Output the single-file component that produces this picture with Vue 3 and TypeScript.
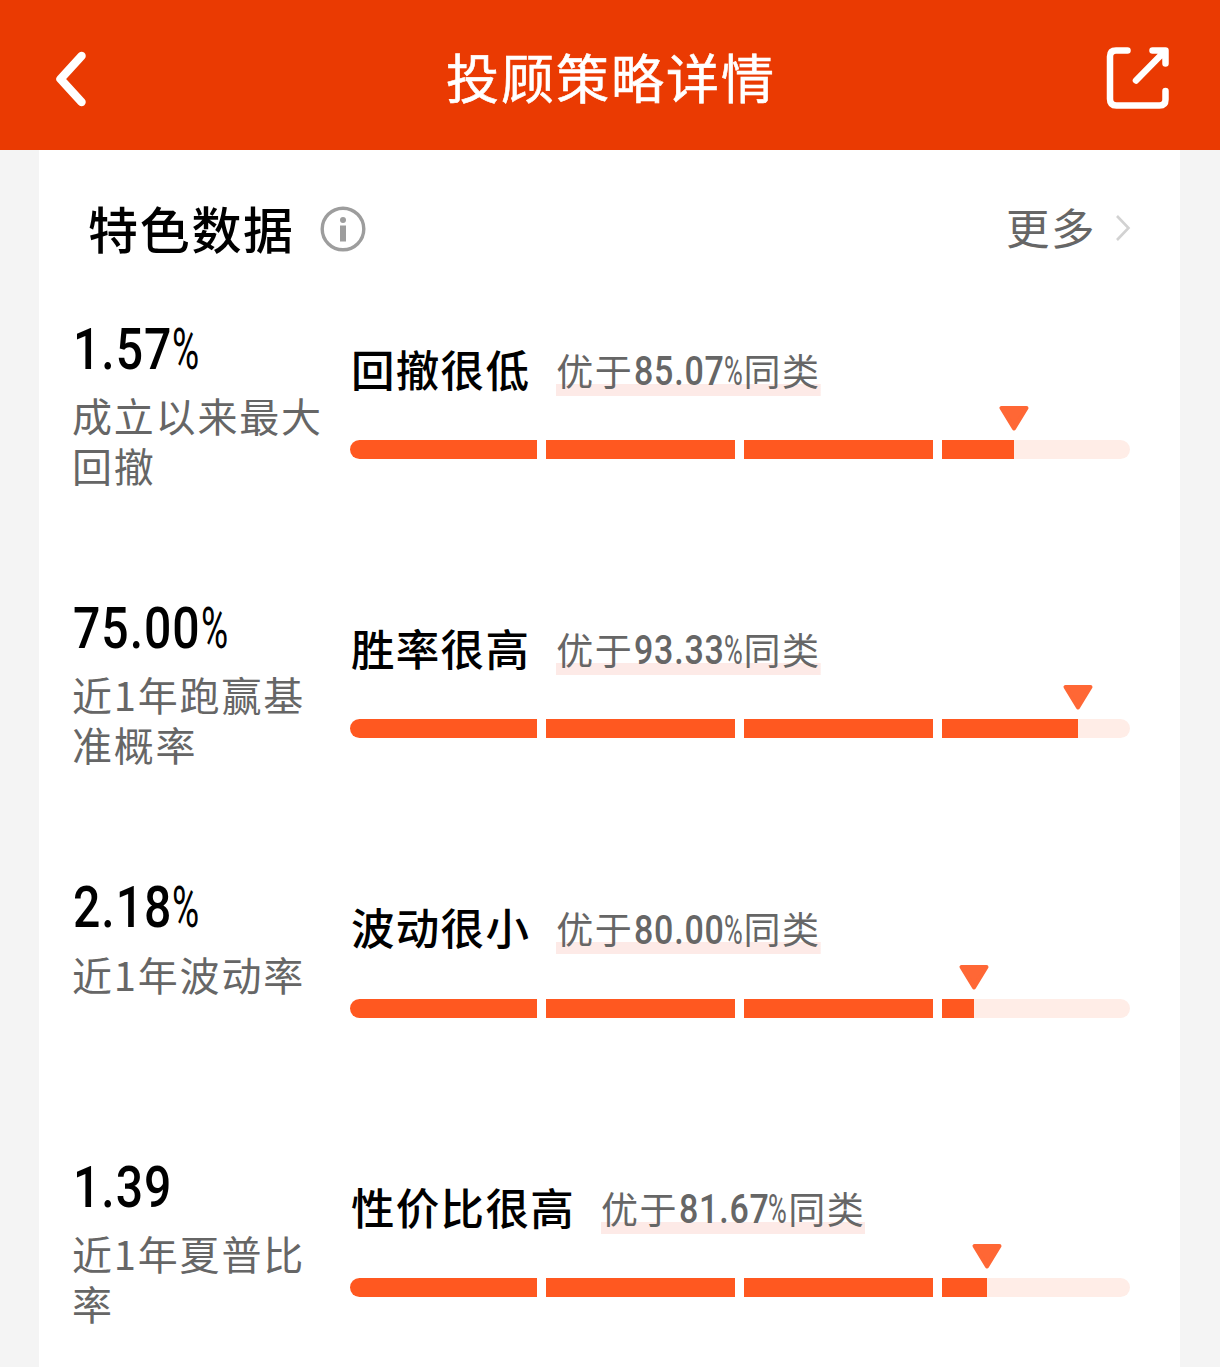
<script setup lang="ts">
interface Metric {
  value: string
  percent: boolean
  label: string
  verdict: string
  rank: number
}

const metrics: Metric[] = [
  { value: '1.57', percent: true, label: '成立以来最大回撤', verdict: '回撤很低', rank: 85.07 },
  { value: '75.00', percent: true, label: '近1年跑赢基准概率', verdict: '胜率很高', rank: 93.33 },
  { value: '2.18', percent: true, label: '近1年波动率', verdict: '波动很小', rank: 80 },
  { value: '1.39', percent: false, label: '近1年夏普比率', verdict: '性价比很高', rank: 81.67 },
]

const BAR = 780
const GAP = 9
// Widths of the four segments, left to right
const SEGMENTS = [187, 189, 189, 188]

// Filled part of one segment, measured along the whole bar
function fill(rank: number, index: number): string {
  const start = SEGMENTS.slice(0, index).reduce((sum, w) => sum + w + GAP, 0)
  const reach = Math.round((BAR * rank) / 100) - start
  return `${Math.max(0, Math.min(SEGMENTS[index], reach))}px`
}

// Room taken by condensed digits: 0.5em for each digit, 0.234em for the point
function digitsWidth(text: string): string {
  return `${((text.length - 1) * 0.5 + 0.234).toFixed(3)}em`
}
</script>

<template>
  <div class="page">
    <header class="bar">
      <svg class="back" viewBox="0 0 40 60" width="40" height="60">
        <path d="M26.500 7 L5.500 30 L26.500 53" />
      </svg>
      <h1>投顾策略详情</h1>
      <svg class="share" viewBox="0 0 66 66" width="66" height="66">
        <path d="M22.500 5.500 H11 Q5 5.500 5 11.500 V54 Q5 60.500 11.500 60.500 H54.500 Q60.500 60.500 60.500 54.500 V46" />
        <path d="M47.500 5.500 H60.500 V18.500 M59 7 L31 35.500" />
      </svg>
    </header>

    <main class="card">
      <div class="section">
        <h2>特色数据</h2>
        <svg class="info" viewBox="0 0 46 46" width="46" height="46">
          <circle cx="23" cy="23" r="20.800" fill="none" stroke="#9d9d9d" stroke-width="3.400" />
          <circle cx="23" cy="14" r="3" fill="#9d9d9d" />
          <path d="M20 19.500 H26 V35.500 H20 Z" fill="#9d9d9d" />
        </svg>
        <a class="more">
          <span>更多</span>
          <svg viewBox="0 0 16 28" width="16" height="28">
            <path d="M2 2 L13.500 14 L2 26" fill="none" stroke="#d2d2d2" stroke-width="2.600" />
          </svg>
        </a>
      </div>

      <section v-for="m in metrics" :key="m.verdict" class="metric">
        <div class="left">
          <div class="value">
            <span class="digits" :style="{ width: digitsWidth(m.value) }"><b>{{ m.value }}</b></span>
            <span v-if="m.percent" class="pct"><i>%</i></span>
          </div>
          <p class="label">{{ m.label }}</p>
        </div>
        <div class="right">
          <div class="headline">
            <strong>{{ m.verdict }}</strong>
            <span class="rank">
              <span>优于</span>
              <span class="number">
                <span class="digits" :style="{ width: digitsWidth(m.rank.toFixed(2)) }"><b>{{ m.rank.toFixed(2) }}</b></span>
                <span class="pct"><i>%</i></span>
              </span>
              <span>同类</span>
            </span>
          </div>
          <div class="track">
            <span v-for="(w, i) in SEGMENTS" :key="i" class="segment" :style="{ width: w + 'px' }">
              <span class="filled" :style="{ width: fill(m.rank, i) }"></span>
            </span>
            <svg class="marker" :style="{ left: m.rank + '%' }" viewBox="0 0 32 27" width="32" height="27">
              <path d="M3.500 3 H28.500 L16 23.500 Z" />
            </svg>
          </div>
        </div>
      </section>
    </main>
  </div>
</template>

<style>
body {
  margin: 0;
  background: #f4f4f4;
}
</style>

<style scoped>
.page {
  width: 1220px;
  height: 1367px;
  overflow: hidden;
  background: #f4f4f4;
  font-family: "Noto Sans CJK SC", sans-serif;
  color: #000;
}

h1,
h2,
p {
  margin: 0;
}

.bar {
  display: flex;
  align-items: center;
  justify-content: space-between;
  height: 150px;
  box-sizing: border-box;
  padding: 5px 49px 0 55px;
  background: #ea3a02;
  color: #fff;
}

.bar svg {
  fill: none;
  stroke: #fff;
  stroke-linecap: round;
  stroke-linejoin: round;
}

.back {
  stroke-width: 8.500px;
  margin: 2px 22px 0 0;
}

.share {
  stroke-width: 6.500px;
}

h1 {
  font-size: 53px;
  font-weight: 400;
  line-height: 80px;
  letter-spacing: 2px;
  margin-top: -3px;
  -webkit-text-stroke: 0.600px #fff;
}

.card {
  width: 1141px;
  height: 1217px;
  margin-left: 39px;
  background: #fff;
}

.section {
  display: flex;
  align-items: center;
  height: 157px;
  padding: 0 49px;
}

h2 {
  font-size: 50px;
  font-weight: 500;
  letter-spacing: 1.700px;
  line-height: 72px;
  margin-top: -4px;
}

.info {
  margin: 0 0 0 25.500px;
}

.more {
  display: flex;
  align-items: center;
  gap: 19px;
  margin-left: auto;
  font-size: 43.500px;
  letter-spacing: 1.500px;
  color: #666;
}

.more span {
  margin-top: -4px;
}

.more svg {
  margin-top: -2px;
}

.metric {
  display: flex;
  height: 279.400px;
  padding-left: 33px;
}

.left {
  width: 278px;
}

.value {
  display: flex;
  height: 83px;
  align-items: center;
  font-size: 58px;
  line-height: 66px;
}

.digits,
.pct {
  display: inline-block;
  white-space: nowrap;
  font-family: Roboto, sans-serif;
}

.digits b,
.pct i {
  display: inline-block;
  font-style: normal;
  font-weight: 500;
  transform: scaleX(0.85);
  transform-origin: left;
}

.digits b {
  letter-spacing: 0.023em;
}

.value b {
  margin-top: -2px;
  letter-spacing: 0.020em;
  transform: scaleX(0.830);
}

.pct {
  width: 0.500em;
}

.pct i {
  font-weight: 400;
  transform: scaleX(0.640);
}

.value i {
  margin-top: -2px;
}

.value .digits {
  margin: 0 -2px 0 1px;
}

.label {
  width: 262px;
  font-size: 40px;
  letter-spacing: 1.800px;
  line-height: 50px;
  color: #666;
}

.right {
  width: 780px;
}

.headline {
  display: flex;
  align-items: center;
  height: 60px;
  margin-top: 33px;
}

strong {
  margin: -4px 0 0 1px;
  font-size: 43.500px;
  font-weight: 500;
  letter-spacing: 1.300px;
  white-space: nowrap;
}

.rank {
  display: flex;
  align-items: center;
  height: 48px;
  margin: 3px 0 0 26px;
  font-size: 37px;
  letter-spacing: 1.500px;
  color: #666;
  background: linear-gradient(#fdeae7, #fdeae7) bottom / 100% 12px no-repeat;
}

.rank > span {
  margin-top: -4px;
}

.rank > .number {
  display: flex;
  margin: 0 0 0 1px;
  font-size: 40px;
  letter-spacing: 0;
}

.track {
  position: relative;
  display: flex;
  gap: 9px;
  height: 19px;
  margin-top: 40px;
}

.segment {
  overflow: hidden;
  background: #ffede7;
}

.segment:first-child {
  border-radius: 10px 0 0 10px;
}

.segment:nth-child(4) {
  border-radius: 0 10px 10px 0;
}

.filled {
  display: block;
  height: 100%;
  background: #ff5820;
}

.marker {
  position: absolute;
  top: -35px;
  transform: translateX(-50%);
  fill: #ff6735;
  stroke: #ff6735;
  stroke-width: 4px;
  stroke-linejoin: round;
}
</style>
